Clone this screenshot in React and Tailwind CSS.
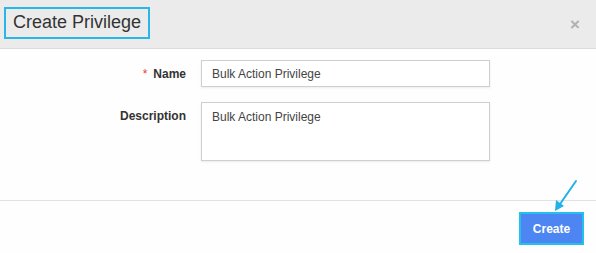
import React from "react";

function App() {
  return (
    <div className="w-[596px] h-[253px] bg-[#fefefe] flex flex-col font-['Liberation_Sans',Arial,sans-serif] relative overflow-hidden">
      {/* HEADER */}
      <div className="h-[49px] bg-[#ebebeb] border-b border-[#dcdcdc] flex items-center justify-between pl-[4px] pr-[16px]">
        <div className="h-[32px] mt-[-3px] border-2 border-[#29b6e8] px-[7px] flex items-center text-[18px] text-[#333]">
          Create Privilege
        </div>
        <span className="text-[#b0b0b0] text-[17px] font-bold leading-none">×</span>
      </div>

      {/* FORM */}
      <div className="h-[152px] border-b border-[#e2e2e2] pt-[11px] flex flex-col gap-[15px]">
        <div className="flex items-start">
          <label className="w-[186px] text-right text-[12px] font-bold text-[#333] pt-[5px]">
            <span className="text-[#e04040] font-normal mr-[6px]">*</span>Name
          </label>
          <div className="ml-[15px] w-[289px] h-[27px] border border-[#cfcfcf] bg-white shadow-[0_1px_2px_rgba(0,0,0,0.08)] px-[10px] flex items-center text-[12px] text-[#444]">
            Bulk Action Privilege
          </div>
        </div>
        <div className="flex items-start">
          <label className="w-[186px] text-right text-[12px] font-bold text-[#333] pt-[5px]">
            Description
          </label>
          <div className="ml-[15px] w-[289px] h-[59px] border border-[#cfcfcf] bg-white shadow-[0_1px_2px_rgba(0,0,0,0.08)] px-[10px] pt-[5px] text-[12px] text-[#444]">
            Bulk Action Privilege
          </div>
        </div>
      </div>

      {/* FOOTER */}
      <div className="flex-1 flex justify-end items-start pt-[11px] pr-[12px]">
        <button className="w-[65px] h-[33px] border-2 border-[#22c0ea] bg-[#4d85f2] text-white text-[12px] font-bold">
          Create
        </button>
      </div>

      {/* arrow pointer */}
      <svg className="absolute left-[550px] top-[178px]" width="32" height="36" viewBox="0 0 32 36">
        <line x1="26" y1="3" x2="8" y2="29" stroke="#1fb3e6" strokeWidth="2" strokeLinecap="round" />
        <path d="M5 33 L6 22 L14 28 Z" fill="#1fb3e6" />
      </svg>
    </div>
  );
}

export default App;
